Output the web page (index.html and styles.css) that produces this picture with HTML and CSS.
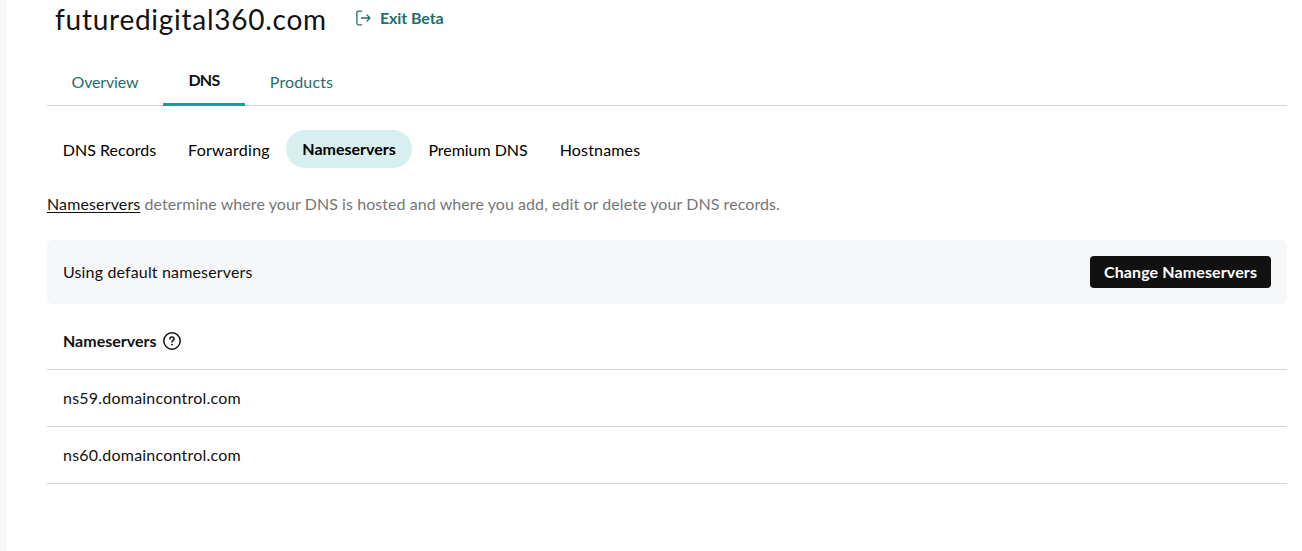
FILE: index.html
```html
<!DOCTYPE html>
<html lang="en">
<head>
<meta charset="utf-8">
<title>DNS Nameservers</title>
<link rel="stylesheet" href="styles.css">
</head>
<body>
<div class="rail"></div>
<main class="page">
  <header class="header">
    <h1 class="domain">futuredigital360.com</h1>
    <a class="exit">
      <svg class="exit-icon" width="16" height="16" viewBox="0 0 16 16" fill="none" stroke="currentColor" stroke-width="1.3" stroke-linecap="round" stroke-linejoin="round"><path d="M5.6 1.2H2.4Q.9 1.2 .9 2.7V13.3Q.9 14.8 2.4 14.8H5.6M5.4 8H14M10.9 4.9L14 8L10.9 11.1"/></svg>
      <span class="exit-label">Exit Beta</span>
    </a>
  </header>
  <nav class="tabs">
    <a class="tab overview">Overview</a>
    <a class="tab dns active">DNS</a>
    <a class="tab products">Products</a>
  </nav>
  <nav class="pills">
    <a class="pill records">DNS Records</a>
    <a class="pill forwarding">Forwarding</a>
    <a class="pill servers selected">Nameservers</a>
    <a class="pill premium">Premium DNS</a>
    <a class="pill hostnames">Hostnames</a>
  </nav>
  <p class="intro"><a class="intro-link">Nameservers</a> determine where your DNS is hosted and where you add, edit or delete your DNS records.</p>
  <section class="banner">
    <span class="banner-text">Using default nameservers</span>
    <button class="change">Change Nameservers</button>
  </section>
  <section class="list">
    <div class="row head">
      <span class="head-label">Nameservers</span>
      <svg class="help" width="18" height="18" viewBox="0 0 18 18" fill="none" stroke="currentColor" stroke-width="1.5" stroke-linecap="round"><circle cx="9" cy="9" r="8.2"/><path d="M6.9 7.1C6.9 5.6 7.8 4.9 9 4.9C10.2 4.9 11.1 5.7 11.1 6.8C11.1 8.4 9 8.4 9 10"/><circle cx="9" cy="12.6" r=".95" fill="currentColor" stroke="none"/></svg>
    </div>
    <div class="row">ns59.domaincontrol.com</div>
    <div class="row">ns60.domaincontrol.com</div>
  </section>
</main>
</body>
</html>
```
FILE: styles.css
```css
* { box-sizing: border-box; }
body {
  margin: 0;
  display: flex;
  height: 551px;
  overflow: hidden;
  background: #fff;
  color: #111;
  font: 400 16px/24px Lato, sans-serif;
  letter-spacing: .22px;
}
.rail { flex: 0 0 7px; background: #f5f7f8; }
.page { width: 1280px; padding-left: 40px; }
.header { display: flex; height: 60px; padding-left: 8px; }
.domain {
  width: 301px;
  margin: 0;
  font-size: 28px;
  line-height: 38px;
  font-weight: 400;
  letter-spacing: .74px;
  white-space: nowrap;
}
.exit { display: flex; gap: 8px; height: 36px; align-items: center; color: #1f6e6c; font-weight: 700; letter-spacing: -.1px; }
.tabs { display: flex; height: 46px; border-bottom: 1px solid #d3d6d8; }
.tab { height: 46px; padding-top: 10px; text-align: center; color: #1f6e6c; }
.overview { width: 116px; letter-spacing: -.15px; }
.dns { width: 82px; letter-spacing: -.7px; }
.products { width: 113px; letter-spacing: .15px; }
.tab.active { padding-top: 8px; color: #111; font-weight: 700; border-bottom: 3px solid #09a1a1; border-radius: 2px 2px 0 0; }
.pills { display: flex; margin-top: 24px; height: 38px; }
.pill { line-height: 40px; text-align: center; white-space: nowrap; color: #000; }
.records { width: 125px; letter-spacing: .05px; }
.forwarding { width: 114px; letter-spacing: .27px; }
.servers { width: 126px; letter-spacing: 0; }
.premium { width: 132px; letter-spacing: -.05px; }
.hostnames { width: 112px; letter-spacing: .15px; }
.pill.selected { border-radius: 19px; background: #d8efef; line-height: 38px; font-weight: 700; }
.intro { margin: 24px 0; color: #767676; white-space: nowrap; letter-spacing: .07px; }
.intro-link { color: #111; letter-spacing: .13px; text-decoration: underline; text-underline-offset: 2px; }
.banner {
  display: flex;
  align-items: center;
  justify-content: space-between;
  height: 64px;
  padding: 0 16px;
  border-radius: 6px;
  background: #f5f7f8;
}
.banner-text { letter-spacing: .15px; }
.change {
  width: 181px;
  height: 32px;
  padding: 0;
  border: 0;
  border-radius: 4px;
  background: #111;
  color: #fff;
  font: 700 16px/32px Lato, sans-serif;
  letter-spacing: .12px;
}
.list { padding-top: 9px; }
.row { display: flex; height: 57px; padding: 16px 16px 0; border-bottom: 1px solid #d3d6d8; }
.head { gap: 7px; font-weight: 700; letter-spacing: 0; }
.help { margin-top: 3px; }
```
